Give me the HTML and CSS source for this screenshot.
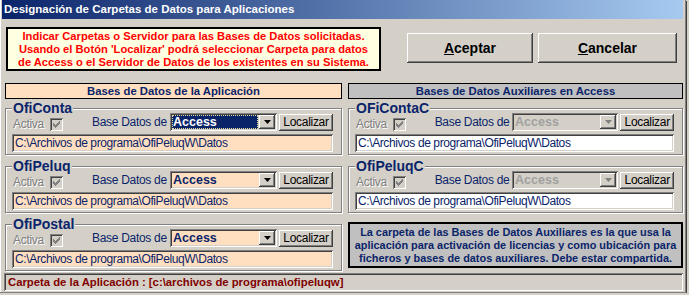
FILE: index.html
```html
<!DOCTYPE html>
<html lang="es">
<head>
    <meta charset="UTF-8">
    <title>Designación de Carpetas de Datos para Aplicaciones</title>
    <link rel="stylesheet" href="styles.css">
</head>
<body>
<div class="window">
    <div class="titlebar">Designación de Carpetas de Datos para Aplicaciones</div>
    <div class="client">
        <div class="top-row">
            <div class="notice">
                Indicar Carpetas o Servidor para las Bases de Datos solicitadas.<br>
                Usando el Botón 'Localizar' podrá seleccionar Carpeta para datos<br>
                de Access o el Servidor de Datos de los existentes en su Sistema.
            </div>
            <div class="actions">
                <button class="btn btn-big btn-ok"><u>A</u>ceptar</button>
                <button class="btn btn-big btn-cancel"><u>C</u>ancelar</button>
            </div>
        </div>

        <div class="columns">
            <!-- columna izquierda: bases de la aplicacion -->
            <div class="column">
                <div class="col-head peach">Bases de Datos de la Aplicación</div>

                <div class="group">
                    <div class="group-title">OfiConta</div>
                    <div class="dbrow">
                        <span class="activa">Activa</span>
                        <span class="check"><svg width="7" height="7" viewBox="0 0 7 7"><path d="M6 0h1v3h-1v1h-1v1h-1v1h-1v1h-1v-1h-1v-1h-1v-3h1v1h1v1h1v-1h1v-1h1z"/></svg></span>
                        <span class="base-lbl">Base Datos de</span>
                        <div class="combo">
                            <span class="combo-text selected"><span class="focus-rect">Access</span></span>
                            <span class="combo-btn"><svg width="7" height="4" viewBox="0 0 7 4"><path d="M0 0h7l-3.5 4z"/></svg></span>
                        </div>
                        <button class="btn btn-small">Localizar</button>
                    </div>
                    <div class="path peach">C:\Archivos de programa\OfiPeluqW\Datos</div>
                </div>

                <div class="group">
                    <div class="group-title">OfiPeluq</div>
                    <div class="dbrow">
                        <span class="activa">Activa</span>
                        <span class="check"><svg width="7" height="7" viewBox="0 0 7 7"><path d="M6 0h1v3h-1v1h-1v1h-1v1h-1v1h-1v-1h-1v-1h-1v-3h1v1h1v1h1v-1h1v-1h1z"/></svg></span>
                        <span class="base-lbl">Base Datos de</span>
                        <div class="combo peach">
                            <span class="combo-text">Access</span>
                            <span class="combo-btn"><svg width="7" height="4" viewBox="0 0 7 4"><path d="M0 0h7l-3.5 4z"/></svg></span>
                        </div>
                        <button class="btn btn-small">Localizar</button>
                    </div>
                    <div class="path peach">C:\Archivos de programa\OfiPeluqW\Datos</div>
                </div>

                <div class="group">
                    <div class="group-title">OfiPostal</div>
                    <div class="dbrow">
                        <span class="activa">Activa</span>
                        <span class="check"><svg width="7" height="7" viewBox="0 0 7 7"><path d="M6 0h1v3h-1v1h-1v1h-1v1h-1v1h-1v-1h-1v-1h-1v-3h1v1h1v1h1v-1h1v-1h1z"/></svg></span>
                        <span class="base-lbl">Base Datos de</span>
                        <div class="combo peach">
                            <span class="combo-text">Access</span>
                            <span class="combo-btn"><svg width="7" height="4" viewBox="0 0 7 4"><path d="M0 0h7l-3.5 4z"/></svg></span>
                        </div>
                        <button class="btn btn-small">Localizar</button>
                    </div>
                    <div class="path peach">C:\Archivos de programa\OfiPeluqW\Datos</div>
                </div>
            </div>

            <!-- columna derecha: bases auxiliares -->
            <div class="column column-right">
                <div class="col-head gray">Bases de Datos Auxiliares en Access</div>

                <div class="group">
                    <div class="group-title">OFiContaC</div>
                    <div class="dbrow">
                        <span class="activa">Activa</span>
                        <span class="check"><svg width="7" height="7" viewBox="0 0 7 7"><path d="M6 0h1v3h-1v1h-1v1h-1v1h-1v1h-1v-1h-1v-1h-1v-3h1v1h1v1h1v-1h1v-1h1z"/></svg></span>
                        <span class="base-lbl">Base Datos de</span>
                        <div class="combo disabled">
                            <span class="combo-text">Access</span>
                            <span class="combo-btn"><svg width="7" height="4" viewBox="0 0 7 4"><path d="M0 0h7l-3.5 4z"/></svg></span>
                        </div>
                        <button class="btn btn-small">Localizar</button>
                    </div>
                    <div class="path white">C:\Archivos de programa\OfiPeluqW\Datos</div>
                </div>

                <div class="group">
                    <div class="group-title">OfiPeluqC</div>
                    <div class="dbrow">
                        <span class="activa">Activa</span>
                        <span class="check"><svg width="7" height="7" viewBox="0 0 7 7"><path d="M6 0h1v3h-1v1h-1v1h-1v1h-1v1h-1v-1h-1v-1h-1v-3h1v1h1v1h1v-1h1v-1h1z"/></svg></span>
                        <span class="base-lbl">Base Datos de</span>
                        <div class="combo disabled">
                            <span class="combo-text">Access</span>
                            <span class="combo-btn"><svg width="7" height="4" viewBox="0 0 7 4"><path d="M0 0h7l-3.5 4z"/></svg></span>
                        </div>
                        <button class="btn btn-small">Localizar</button>
                    </div>
                    <div class="path white">C:\Archivos de programa\OfiPeluqW\Datos</div>
                </div>

                <div class="info">
                    La carpeta de las Bases de Datos Auxiliares es la que usa la<br>
                    aplicación para activación de licencias y como ubicación para<br>
                    ficheros y bases de datos auxiliares. Debe estar compartida.
                </div>
            </div>
        </div>

        <div class="status">Carpeta de la Aplicación : [c:\archivos de programa\ofipeluqw]</div>
    </div>
</div>
</body>
</html>
```

FILE: styles.css
```css
/* colores estilo Windows clasico */
body {
    margin: 0;
    background-color: #D4D0C8;
    font-family: "Liberation Sans", Arial, sans-serif;
}

.window {
    width: 685px;
    height: 292px;
    background-color: #D4D0C8;
    border-right: 1px solid #808080;
    border-bottom: 1px solid #808080;
    box-shadow: 1px 1px 0 #404040, inset 1px 0 0 #fff;
    display: flex;
    flex-direction: column;
}

.titlebar {
    height: 19px;
    margin: 0 2px;
    padding-left: 2px;
    background: linear-gradient(to right, #0A246A, #A6CAF0);
    color: #fff;
    font-weight: bold;
    font-size: 11.5px;
    line-height: 19px;
    white-space: nowrap;
}

.client {
    padding-left: 5px;
    display: flex;
    flex-direction: column;
}

.top-row {
    display: flex;
    margin-top: 8px;
    height: 44px;
}

.notice {
    width: 375px;
    margin-left: 1px;
    box-sizing: border-box;
    border: 2px solid #000;
    background-color: #FFFFE1;
    color: #FF0000;
    font-weight: bold;
    font-size: 11.2px;
    line-height: 13px;
    text-align: center;
    padding-top: 1px;
    white-space: nowrap;
}

.actions {
    display: flex;
    gap: 5px;
    margin-left: 26px;
    margin-top: 6px;
}

/* botones en relieve */
.btn {
    background-color: #D4D0C8;
    border: none;
    padding: 0;
    color: #000;
    font-family: "Liberation Sans", Arial, sans-serif;
    box-shadow: inset -1px -1px 0 #404040, inset 1px 1px 0 #fff, inset -2px -2px 0 #808080;
}

.btn-big {
    height: 30px;
    font-size: 14px;
    font-weight: bold;
}

.btn-ok {
    width: 126px;
}

.btn-cancel {
    width: 139px;
}

.btn-small {
    width: 54px;
    height: 17px;
    margin-left: 2px;
    font-size: 12px;
    letter-spacing: -0.3px;
}

.columns {
    display: flex;
    gap: 6px;
    margin-top: 12px;
}

.column {
    width: 337px;
    display: flex;
    flex-direction: column;
}

.column-right {
    width: 335px;
}

.col-head {
    height: 16px;
    box-sizing: border-box;
    border: 1px solid #000;
    color: #0A246A;
    font-weight: bold;
    font-size: 11.3px;
    line-height: 14px;
    text-align: center;
}

.peach {
    background-color: #FFDFBF;
}

.white {
    background-color: #fff;
}

.col-head.gray {
    background-color: #C0C0C0;
}

/* marco grabado de cada base de datos */
.group {
    margin-top: 9px;
    border: 1px solid #808080;
    box-shadow: inset 1px 1px 0 #fff, 1px 1px 0 #fff;
    padding: 0 8px 2px 6px;
}

.group + .group {
    margin-top: 11px;
}

.group-title {
    width: fit-content;
    margin: -9px 0 0 0;
    padding: 0 1px;
    height: 16px;
    background-color: #D4D0C8;
    color: #0A246A;
    font-weight: bold;
    font-size: 14px;
    line-height: 16px;
}

.dbrow {
    display: flex;
    align-items: center;
    height: 18px;
    margin-top: -3px;
}

.activa {
    width: 37px;
    padding-left: 1px;
    color: #808080;
    text-shadow: 1px 1px 0 #fff;
    font-size: 12px;
    letter-spacing: -0.3px;
    margin-top: 4px;
}

.check {
    width: 13px;
    height: 13px;
    box-sizing: border-box;
    margin-top: 5px;
    display: flex;
    align-items: center;
    justify-content: center;
    background-color: #D4D0C8;
    box-shadow: inset 1px 1px 0 #808080, inset -1px -1px 0 #fff, inset 2px 2px 0 #404040, inset -2px -2px 0 #D4D0C8;
}

.check svg {
    fill: #808080;
}

.base-lbl {
    width: 78px;
    margin-left: 29px;
    color: #0A246A;
    font-size: 12px;
    letter-spacing: -0.3px;
}

.combo {
    width: 107px;
    height: 18px;
    box-sizing: border-box;
    padding: 2px;
    display: flex;
    box-shadow: inset 1px 1px 0 #808080, inset -1px -1px 0 #fff, inset 2px 2px 0 #404040, inset -2px -2px 0 #D4D0C8;
}

.combo-text {
    flex: 1;
    padding-left: 1px;
    color: #0A246A;
    font-weight: bold;
    font-size: 12.5px;
    line-height: 14px;
}

.combo-text.selected {
    background-color: #0A246A;
    color: #fff;
    padding: 0;
    margin-right: 1px;
}

.focus-rect {
    display: block;
    height: 14px;
    box-sizing: border-box;
    border: 1px dotted #E8E0A0;
    line-height: 12px;
}

.combo-btn {
    width: 16px;
    height: 14px;
    box-sizing: border-box;
    display: flex;
    align-items: center;
    justify-content: center;
    background-color: #D4D0C8;
    box-shadow: inset -1px -1px 0 #404040, inset 1px 1px 0 #fff, inset -2px -2px 0 #808080;
}

.combo-btn svg {
    fill: #000;
}

.combo.disabled {
    background-color: #D4D0C8;
}

.combo.disabled .combo-text {
    color: #A0A0A0;
}

.combo.disabled .combo-btn svg {
    fill: #808080;
}

.path {
    margin-top: 3px;
    height: 18px;
    box-sizing: border-box;
    padding: 2px 3px;
    color: #0A246A;
    font-size: 12px;
    line-height: 14px;
    letter-spacing: -0.4px;
    white-space: nowrap;
    box-shadow: inset 1px 1px 0 #808080, inset -1px -1px 0 #fff, inset 2px 2px 0 #404040, inset -2px -2px 0 #D4D0C8;
}

.info {
    margin-top: 9px;
    height: 46px;
    box-sizing: border-box;
    border: 2px solid #000;
    padding-top: 2px;
    background-color: #C0C0C0;
    color: #0A246A;
    font-weight: bold;
    font-size: 10.9px;
    line-height: 13px;
    text-align: center;
    white-space: nowrap;
}

.status {
    width: 679px;
    height: 18px;
    margin: 2px 0 0 -1px;
    box-sizing: border-box;
    padding: 2px 4px;
    color: #800000;
    font-weight: bold;
    font-size: 11.3px;
    line-height: 14px;
    white-space: nowrap;
    box-shadow: inset 1px 1px 0 #808080, inset -1px -1px 0 #fff, inset 2px 2px 0 #404040, inset -2px -2px 0 #D4D0C8;
}
```
